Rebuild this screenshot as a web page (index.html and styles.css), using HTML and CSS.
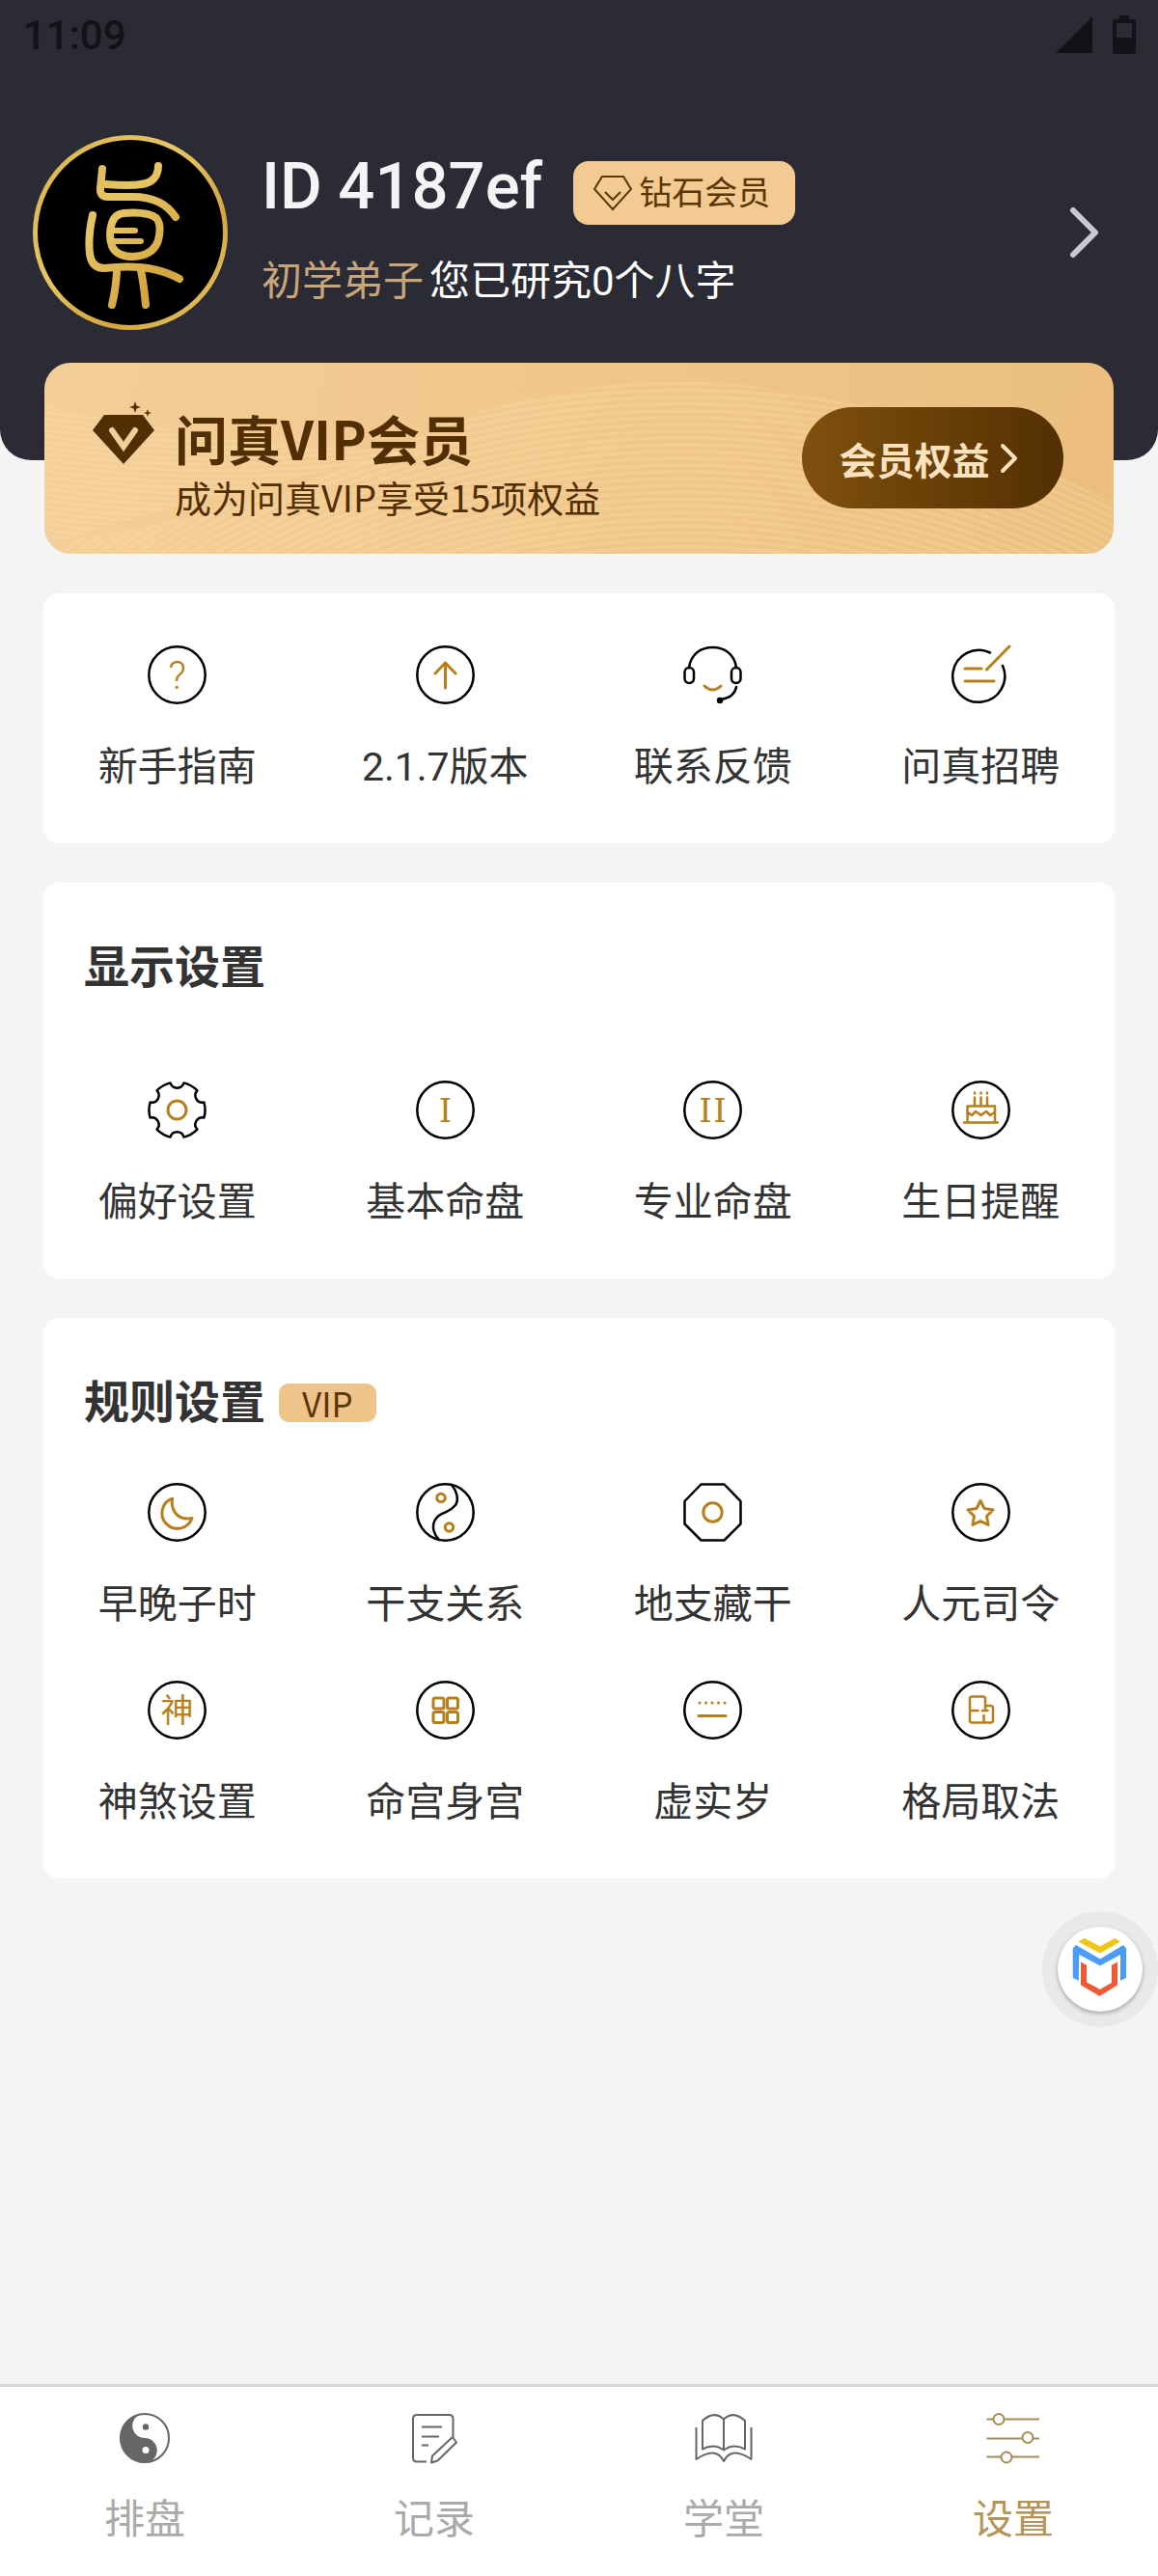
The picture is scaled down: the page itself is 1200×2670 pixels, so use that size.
FILE: index.html
```html
<!DOCTYPE html>
<html lang="zh-CN">
    <head>
        <meta charset="utf-8">
        <meta name="viewport" content="width=device-width, initial-scale=1">
        <title>设置</title>
        <link rel="stylesheet" href="styles.css">
    </head>
    <body>
        <header class="header">
            <div class="statusBar">
                <span class="clock">11:09</span>
                <span class="statusIcons">
                    <svg width="38" height="38" viewBox="0 0 38 38"><path d="M38 0v38H0z"/></svg>
                    <svg width="24" height="40" viewBox="0 0 24 40"><path d="M7 0h10v4h4a3 3 0 0 1 3 3v30a3 3 0 0 1-3 3H3a3 3 0 0 1-3-3V7a3 3 0 0 1 3-3h4z"/><path class="batteryEmpty" d="M4 8h16v15H4z"/></svg>
                </span>
            </div>
            <div class="profile">
                <svg class="avatar" viewBox="0 0 202 202">
                    <defs>
                        <linearGradient id="gold" x1="0" y1="0" x2="202" y2="202" gradientUnits="userSpaceOnUse">
                            <stop offset="0" stop-color="#d9b04a"/>
                            <stop offset=".4" stop-color="#e6c565"/>
                            <stop offset=".7" stop-color="#d3a63f"/>
                            <stop offset="1" stop-color="#e8c96c"/>
                        </linearGradient>
                    </defs>
                    <circle cx="101" cy="101" r="98.5" fill="#000" stroke="url(#gold)" stroke-width="5"/>
                    <g fill="none" stroke="url(#gold)" stroke-width="8" stroke-linecap="round" stroke-linejoin="round">
                        <path d="M72 35L70 55Q69 64 78 64H104Q134 64 148 85"/>
                        <path d="M130 32Q130 43 122 48Q112 54 76 51"/>
                        <path d="M62 83Q57 105 59 123Q61 138 74 138Q122 132 152 149"/>
                        <path d="M87 142Q86 160 82 176M112 140Q115 155 117 176"/>
                        <path d="M94 81Q119 79 128 86Q134 93 130 109Q125 125 104 126Q87 126 82 115Q78 103 82 91Q85 82 94 81z"/>
                        <path stroke-width="6" d="M84 99H106M84 110H112"/>
                    </g>
                </svg>
                <div class="profileInfo">
                    <div class="nameRow">
                        <h1 class="name">ID 4187ef</h1>
                        <span class="levelBadge">
                            <svg width="42" height="38" viewBox="0 0 42 38"><path d="M10 2h22l8 13-19 21L2 15zM13 18l8 8 8-8"/></svg>
                            钻石会员
                        </span>
                    </div>
                    <p class="summary"><span class="rank">初学弟子</span>您已研究0个八字</p>
                </div>
                <button class="profileMore" aria-label="个人资料">
                    <svg width="36" height="56" viewBox="0 0 36 56"><path d="M6 5l23 23L6 51"/></svg>
                </button>
            </div>
        </header>

        <main class="content">
            <section class="vip">
                <svg class="vipWaves" viewBox="0 0 1106 197" preserveAspectRatio="none">
                    <defs>
                        <radialGradient id="waveA" gradientUnits="userSpaceOnUse" cx="0" cy="0" r="7" spreadMethod="repeat" gradientTransform="translate(660 900) scale(1.1 1)">
                            <stop offset="0" stop-color="#ffe3ae" stop-opacity="0"/>
                            <stop offset=".5" stop-color="#ffe3ae" stop-opacity=".3"/>
                            <stop offset="1" stop-color="#ffe3ae" stop-opacity="0"/>
                        </radialGradient>
                        <radialGradient id="waveB" gradientUnits="userSpaceOnUse" cx="0" cy="0" r="6" spreadMethod="repeat" gradientTransform="translate(180 -900) scale(1.2 1)">
                            <stop offset="0" stop-color="#ffe3ae" stop-opacity="0"/>
                            <stop offset=".5" stop-color="#ffe3ae" stop-opacity=".3"/>
                            <stop offset="1" stop-color="#ffe3ae" stop-opacity="0"/>
                        </radialGradient>
                    </defs>
                    <path fill="url(#waveB)" d="M0 44Q200 90 420 90Q210 120 0 190z"/>
                    <path fill="url(#waveA)" d="M40 180Q240 150 420 60Q600 0 760 28Q920 50 1106 145V197H0z"/>
                </svg>
                <svg class="vipGem" viewBox="0 0 76 68">
                    <path fill="#512f03" d="M18 14h40l12 16-32 35L6 30zM50 0l1.500 4.500L56 6l-4.500 1.500L50 12l-1.500-4.500L44 6l4.500-1.500zM63 8l1 3 3 1-3 1-1 3-1-3-3-1 3-1z"/>
                    <path fill="none" stroke="#f3cd97" stroke-width="6" stroke-linecap="round" d="M26 30l12 17 12-17"/>
                </svg>
                <div class="vipText">
                    <h2 class="vipTitle">问真VIP会员</h2>
                    <p class="vipDesc">成为问真VIP享受15项权益</p>
                </div>
                <button class="vipButton">
                    会员权益
                    <svg width="20" height="32" viewBox="0 0 20 32"><path d="M3 3l13 13L3 29"/></svg>
                </button>
            </section>

            <section class="card">
                <nav class="grid">
                    <a class="item" href="#guide">
                        <svg class="icon" viewBox="0 0 61 61"><circle cx="30.500" cy="30.500" r="29.200"/><text class="glyph question" x="30.500" y="45">?</text></svg>
                        新手指南
                    </a>
                    <a class="item" href="#version">
                        <svg class="icon" viewBox="0 0 61 61"><circle cx="30.500" cy="30.500" r="29.200"/><path class="accent" d="M30.500 44V18M20 29l10.500-11L41 29"/></svg>
                        2.1.7版本
                    </a>
                    <a class="item" href="#feedback">
                        <svg class="icon" viewBox="0 0 61 61">
                            <path d="M6 23C8 9 18 2 30.500 2S53 9 55 23"/>
                            <rect x="1.500" y="23" width="9.500" height="16" rx="4.700"/><rect x="50" y="23" width="9.500" height="16" rx="4.700"/>
                            <path d="M55 43Q53 54 39 56"/><circle class="solid" cx="38" cy="57" r="2"/>
                            <path class="accent" d="M22 42q8.500 8 17 0"/>
                        </svg>
                        联系反馈
                    </a>
                    <a class="item" href="#jobs">
                        <svg class="icon" viewBox="0 0 61 61"><path d="M40 7.500A27 27 0 1 0 53 21"/><path class="accent" d="M60 1L36.500 25M14 24h17M14 37h30"/></svg>
                        问真招聘
                    </a>
                </nav>
            </section>

            <section class="card">
                <h2 class="cardTitle">显示设置</h2>
                <nav class="grid displayGrid">
                    <a class="item" href="#preferences">
                        <svg class="icon" viewBox="0 0 61 61">
                            <path d="M37.500 2.400A29 29 0 0 1 51.400 10.400A7.300 7.300 0 0 0 58.400 22.500A29 29 0 0 1 58.400 38.500A7.300 7.300 0 0 0 51.400 50.600A29 29 0 0 1 37.500 58.600A7.300 7.300 0 0 0 23.500 58.600A29 29 0 0 1 9.600 50.600A7.300 7.300 0 0 0 2.600 38.500A29 29 0 0 1 2.600 22.500A7.300 7.300 0 0 0 9.600 10.400A29 29 0 0 1 23.500 2.400A7.300 7.300 0 0 0 37.500 2.400z"/>
                            <circle class="accent" cx="30.500" cy="30.500" r="9.500"/>
                        </svg>
                        偏好设置
                    </a>
                    <a class="item" href="#basic">
                        <svg class="icon" viewBox="0 0 61 61"><circle cx="30.500" cy="30.500" r="29.200"/><text class="glyph numeral" x="30.500" y="43">I</text></svg>
                        基本命盘
                    </a>
                    <a class="item" href="#pro">
                        <svg class="icon" viewBox="0 0 61 61"><circle cx="30.500" cy="30.500" r="29.200"/><text class="glyph numeral" x="23" y="43">I</text><text class="glyph numeral" x="38" y="43">I</text></svg>
                        专业命盘
                    </a>
                    <a class="item" href="#birthday">
                        <svg class="icon" viewBox="0 0 61 61">
                            <circle cx="30.500" cy="30.500" r="29.200"/>
                            <path class="accent thin" d="M13 43.500h35M16.500 43V26.500h28.500V43M17 33l4 3 4-4 5.500 4 5.500-4 4 4 4.500-3M24 17.500V26M30.500 17.500V26M37 17.500V26"/>
                            <path class="accent thin" d="M24 12.500v1M30.500 12.500v1M37 12.500v1"/>
                        </svg>
                        生日提醒
                    </a>
                </nav>
            </section>

            <section class="card">
                <h2 class="cardTitle">规则设置 <span class="vipTag">VIP</span></h2>
                <nav class="grid rulesGrid">
                    <a class="item" href="#zishi">
                        <svg class="icon" viewBox="0 0 61 61"><circle cx="30.500" cy="30.500" r="29.200"/><path class="accent" d="M25.600 16.200A16 16 0 1 0 46 36.500Q35 39 28.500 31Q24 24 25.600 16.200z"/></svg>
                        早晚子时
                    </a>
                    <a class="item" href="#ganzhi">
                        <svg class="icon" viewBox="0 0 61 61"><circle cx="30.500" cy="30.500" r="29.200"/><path d="M37 2C42 8 45 17 41 23C37 28 34 29 30.500 30.500C26 32 22 34 19.500 39C16 46 19 54 24 59"/><circle class="accent" cx="26" cy="15.500" r="4.300"/><circle class="accent" cx="34.500" cy="46" r="4.300"/></svg>
                        干支关系
                    </a>
                    <a class="item" href="#canggan">
                        <svg class="icon" viewBox="0 0 61 61"><path d="M18.500 1.500h24l17 17.500v23.500l-17 17h-24l-17-17V19z"/><circle class="accent" cx="30.500" cy="30.500" r="9.700"/></svg>
                        地支藏干
                    </a>
                    <a class="item" href="#siling">
                        <svg class="icon" viewBox="0 0 61 61"><circle cx="30.500" cy="30.500" r="29.200"/><path class="accent" d="M30 18.500L34 26.500L43 28L36.500 34.500L38 43.500L30 39.500L22 43.500L23.500 34.500L17 28L26 26.500z"/></svg>
                        人元司令
                    </a>
                    <a class="item" href="#shensha">
                        <svg class="icon" viewBox="0 0 61 61"><circle cx="30.500" cy="30.500" r="29.200"/><text class="glyph shen" x="30.500" y="43">神</text></svg>
                        神煞设置
                    </a>
                    <a class="item" href="#minggong">
                        <svg class="icon" viewBox="0 0 61 61"><circle cx="30.500" cy="30.500" r="29.200"/><g class="accent"><rect x="18" y="18" width="11" height="11" rx="2"/><rect x="32.500" y="18" width="11" height="11" rx="2"/><rect x="18" y="32.500" width="11" height="11" rx="2"/><rect x="32.500" y="32.500" width="11" height="11" rx="2"/></g></svg>
                        命宫身宫
                    </a>
                    <a class="item" href="#suishu">
                        <svg class="icon" viewBox="0 0 61 61"><circle cx="30.500" cy="30.500" r="29.200"/><path class="accent" d="M16 36.500h28"/><path class="accent" stroke-dasharray="0 6.500" d="M17 23h27"/></svg>
                        虚实岁
                    </a>
                    <a class="item" href="#geju">
                        <svg class="icon" viewBox="0 0 61 61"><circle cx="30.500" cy="30.500" r="29.200"/><path class="accent thin" d="M35 31V19q0-2.500-2.500-2.500h-11Q19 16.500 19 19v22q0 2.500 2.500 2.500h19q2.500 0 2.500-2.500V28.500Q43 26 40.500 26H35M19 31h8.500M32 31h5.500M33.500 36v7"/></svg>
                        格局取法
                    </a>
                </nav>
            </section>
        </main>

        <button class="floating" aria-label="助手">
            <svg viewBox="0 0 120 120">
                <circle class="floatingDisc" cx="60" cy="60" r="44"/>
                <path fill="#f2c511" d="M37.500 31.500L44 28l16 8.500L75 28l6 3.500-21 12z"/>
                <path fill="#4b9bfa" d="M31.700 38.500L35 35l25 14.500L84 35l3 3.500V69l-6 3V45L60 56.500 38.300 45l-.500 27-6-3z"/>
                <path fill="#ee5a34" d="M40 52.500l6 3.500v17.500l14 7.500 12-7V56l6-3.500v24L59.500 88 40 76.500z"/>
            </svg>
        </button>

        <nav class="tabBar">
            <a class="tab" href="#paipan">
                <svg viewBox="0 0 60 54">
                    <circle cx="30" cy="27" r="25"/>
                    <path fill="#666" stroke="none" d="M30 1.500A25.500 25.500 0 0 0 30 52.500A12.700 12.700 0 0 0 30 27A12.700 12.700 0 0 1 30 1.500z"/>
                    <circle fill="#666" stroke="none" cx="31" cy="15.500" r="3.200"/><circle fill="#fff" stroke="none" cx="31" cy="39.500" r="3.500"/>
                </svg>
                排盘
            </a>
            <a class="tab" href="#records">
                <svg viewBox="0 0 60 54"><path d="M22 51.500H12q-4 0-4-4V7q0-4 4-4h33.500q4 0 4 4v19M17 15.500h21M17 25.500h18M17 34.500h7M49 26l4 5.500-19.500 19-6.500 2 1-7z"/></svg>
                记录
            </a>
            <a class="tab" href="#school">
                <svg viewBox="0 0 60 54"><path d="M30 7.500V39M30 7.500Q20-2 8 9v29.500Q20 32 30 39.500Q40 32 52 38.500V9Q40-2 30 7.500M1.500 16v33Q22 35 30 51Q38 35 58.500 49V16"/></svg>
                学堂
            </a>
            <a class="tab active" href="#settings">
                <svg viewBox="0 0 60 54"><path d="M2.500 7.500h7M20.500 7.500H57M2.500 27.500H40M51 27.500h6M2.500 46.500H17M29 46.500h28"/><circle cx="15" cy="7.500" r="5.500"/><circle cx="45" cy="26.500" r="5.500"/><circle cx="23" cy="47" r="5.500"/></svg>
                设置
            </a>
        </nav>
    </body>
</html>
```

FILE: styles.css
```css
* {
    box-sizing: border-box;
}

body {
    display: flex;
    flex-direction: column;
    min-height: 100vh;
    margin: 0;
    background: #f4f4f4;
    color: #333;
    font-family: Roboto, 'Noto Sans CJK SC', sans-serif;
}

h1, h2, p {
    margin: 0;
}

a {
    color: inherit;
    text-decoration: none;
}

button {
    padding: 0;
    border: 0;
    background: none;
    font: inherit;
    cursor: pointer;
}

svg {
    display: block;
    flex: none;
}

.header {
    padding-bottom: 135px;
    border-radius: 0 0 32px 32px;
    background: #2a2b34;
    color: #fff;
}

.statusBar {
    display: flex;
    align-items: center;
    justify-content: space-between;
    height: 72px;
    padding: 0 23px 0 24px;
    color: #121217;
}

.clock {
    font-size: 42px;
    font-weight: 500;
}

.statusIcons {
    display: flex;
    align-items: center;
    gap: 21px;
    fill: #121217;
}

.batteryEmpty {
    fill: #2a2b34;
}

/* profile */
.profile {
    display: flex;
    align-items: center;
    gap: 35px;
    padding: 68px 58px 0 34px;
}

.avatar {
    width: 202px;
    height: 202px;
}

.profileInfo {
    flex: 1;
    align-self: flex-start;
    padding-top: 13px;
}

.nameRow {
    display: flex;
    align-items: flex-end;
    gap: 32px;
}

.name {
    color: #f4f4f7;
    font-size: 67px;
    font-weight: 500;
    line-height: 80px;
}

.levelBadge {
    display: flex;
    align-items: center;
    gap: 6px;
    height: 66px;
    padding: 0 26px 0 20px;
    border-radius: 16px;
    background: #f2ca92;
    color: #5b3605;
    font-size: 34px;
    line-height: 66px;
}

.levelBadge svg {
    fill: none;
    stroke: #5b3605;
    stroke-width: 2;
}

.summary {
    margin-top: 29px;
    font-size: 42px;
    line-height: 60px;
}

.rank {
    margin-right: 6px;
    color: #cba57a;
}

.profileMore svg {
    fill: none;
    stroke: #c9c9d4;
    stroke-width: 6;
    stroke-linecap: round;
    stroke-linejoin: round;
}

/* content */
.content {
    display: flex;
    flex: 1;
    flex-direction: column;
    gap: 41px;
    padding: 0 45px 41px;
}

.vip {
    position: relative;
    display: flex;
    gap: 15px;
    overflow: hidden;
    min-height: 198px;
    margin: -101px 1px 0;
    padding: 40px 52px 22px 44px;
    border-radius: 27px;
    background: linear-gradient(100deg, #f4ce98, #ebbe7e);
    color: #512f03;
    font-family: 'Noto Sans CJK SC', sans-serif;
}

.vipWaves {
    position: absolute;
    inset: 0;
    width: 100%;
    height: 100%;
}

.vipGem {
    position: relative;
    width: 76px;
    height: 68px;
}

.vipText {
    position: relative;
    flex: 1;
}

.vipTitle {
    font-size: 55px;
    font-weight: 700;
    line-height: 74px;
}

.vipDesc {
    font-size: 38px;
    line-height: 50px;
}

.vipButton {
    position: relative;
    display: flex;
    align-items: center;
    justify-content: center;
    gap: 10px;
    width: 271px;
    height: 105px;
    margin-top: 6px;
    padding-right: 8px;
    border-radius: 53px;
    background: linear-gradient(90deg, #80500e, #533002);
    color: #fbe2bf;
    font-size: 39px;
    font-weight: 700;
    line-height: 60px;
}

.vipButton svg {
    fill: none;
    stroke: #fbe2bf;
    stroke-width: 4;
    stroke-linecap: round;
    stroke-linejoin: round;
}

.card {
    padding: 54px 0 49px;
    border-radius: 16px;
    background: #fff;
}

.cardTitle {
    display: flex;
    align-items: center;
    gap: 14px;
    padding: 4px 0 0 42px;
    font-size: 47px;
    font-weight: 700;
    line-height: 60px;
}

.vipTag {
    padding: 0 24px;
    border-radius: 10px;
    background: #efc48b;
    color: #5b3605;
    font-family: 'Noto Sans CJK SC', sans-serif;
    font-size: 35px;
    font-weight: 400;
    line-height: 40px;
}

.grid {
    display: grid;
    grid-template-columns: repeat(4, 1fr);
    row-gap: 49px;
}

.displayGrid {
    margin-top: 87px;
}

.rulesGrid {
    margin-top: 53px;
}

.item {
    display: flex;
    flex-direction: column;
    align-items: center;
    gap: 35px;
    font-size: 41px;
    line-height: 60px;
}

.icon {
    width: 61px;
    height: 61px;
    overflow: visible;
    fill: none;
    stroke: #000;
    stroke-width: 2.5;
    stroke-linecap: round;
    stroke-linejoin: round;
}

.accent {
    stroke: #b57f1c;
    stroke-width: 3;
}

.thin {
    stroke-width: 2.5;
}

.solid {
    fill: #000;
}

.glyph {
    fill: #b57f1c;
    stroke: none;
    text-anchor: middle;
}

.question {
    font-size: 41px;
    font-weight: 300;
}

.numeral {
    font-family: 'DejaVu Serif', serif;
    font-size: 34px;
}

.shen {
    font-size: 34px;
}

/* floating button, over the page */
.floating {
    position: fixed;
    right: 0;
    bottom: 569px;
    width: 120px;
    height: 120px;
    border-radius: 50%;
    background: #e9e9e9;
}

.floatingDisc {
    fill: #fff;
    filter: drop-shadow(0 2px 2px rgba(0, 0, 0, .3));
}

.tabBar {
    display: grid;
    grid-template-columns: repeat(4, 1fr);
    padding: 26px 0 28px;
    border-top: 3px solid #d8d8d8;
    background: #fff;
}

.tab {
    display: flex;
    flex-direction: column;
    align-items: center;
    gap: 28px;
    color: #aaa;
    font-size: 42px;
    line-height: 60px;
}

.tab svg {
    width: 60px;
    height: 54px;
    fill: none;
    stroke: #666;
    stroke-width: 2;
    stroke-linejoin: round;
}

.tab.active {
    color: #b5945a;
}

.tab.active svg {
    stroke: #a58c55;
}
```
